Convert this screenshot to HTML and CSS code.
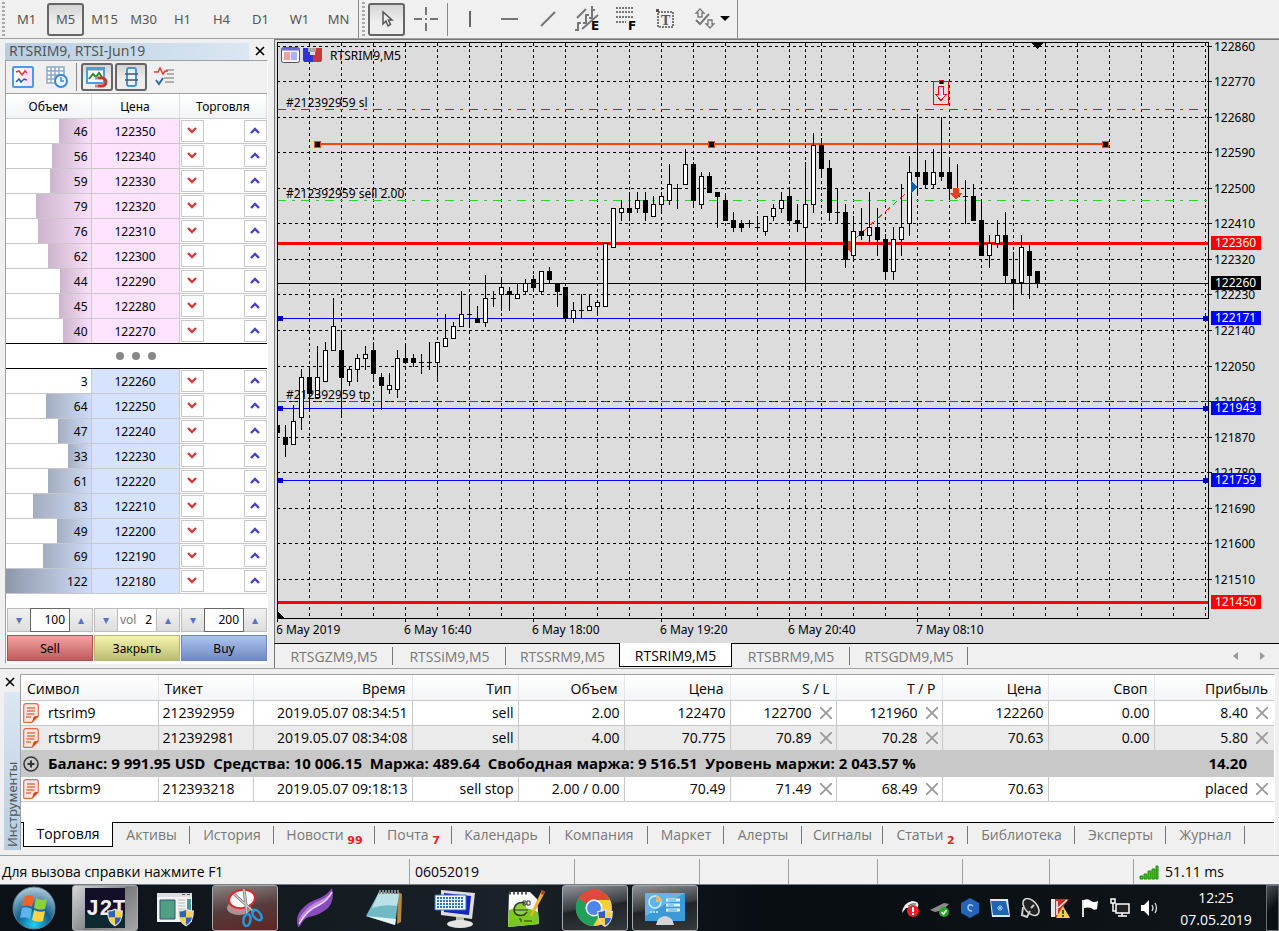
FILE: index.html
```html
<!DOCTYPE html>
<html lang="ru">
<head>
  <meta charset="UTF-8">
  <meta name="viewport" content="width=device-width, initial-scale=1.0">
  <title>RTSRIM9,M5</title>
  <link rel="stylesheet" href="styles.css">
</head>
<body>
  <!-- Shared icons -->
  <svg class="defs" aria-hidden="true">
    <symbol id="shield" viewBox="0 0 16 18">
      <path d="M8 0Q11 2 16 2Q16 14 8 18Q0 14 0 2Q5 2 8 0z" fill="#ddd"/>
      <path d="M8 1.500Q5 3 1.500 3Q1.500 6 2 9H8z" fill="#2d62b4"/>
      <path d="M8 1.500Q11 3 14.500 3Q14.500 6 14 9H8z" fill="#f8d348"/>
      <path d="M2 9H8V16.500Q3 14 2 9z" fill="#f8d348"/>
      <path d="M14 9H8V16.500Q13 14 14 9z" fill="#2d62b4"/>
    </symbol>
    <symbol id="doc" viewBox="0 0 16 20">
      <path d="M3 .7H13Q15.300 .7 15.300 3V13L9 19.300H1Q.5 19 .7 17V3Q.7 .7 3 .7z" fill="#fde8e0" stroke="#e46a4c" stroke-width="1.200"/>
      <path d="M4 5h8M4 8h8M3.500 11h8M3 14h5" stroke="#e8704f" stroke-width="1.300"/>
      <path d="M15.500 13Q12 12.500 10.500 14Q10 17 8.500 19.500z" fill="#e33c12"/>
    </symbol>
    <symbol id="cross" viewBox="0 0 12 12">
      <path d="M0 0L12 12M12 0L0 12" stroke="#999" stroke-width="1.800"/>
    </symbol>
  </svg>

  <!-- Top toolbar -->
  <header class="toolbar">
    <span class="grip"></span>
    <nav class="periods">
      <button>M1</button>
      <button class="pressed">M5</button>
      <button>M15</button>
      <button>M30</button>
      <button>H1</button>
      <button>H4</button>
      <button>D1</button>
      <button>W1</button>
      <button>MN</button>
    </nav>
    <span class="line tall"></span>
    <span class="grip"></span>
    <div class="tools">
      <button class="pressed" aria-label="Cursor"><svg width="26" height="26"><path d="M9 6v12l3-3 2 5 2.500-1.500-2-4.500h3.500z" fill="#eee" stroke="#555" stroke-width="1.500"/></svg></button>
      <button aria-label="Crosshair"><svg width="26" height="26"><path d="M13 1v8M13 17v8M1 13h8M17 13h8M12 13h2" stroke="#777" stroke-width="2"/></svg></button>
      <span class="line"></span>
      <button aria-label="Vertical line"><svg width="26" height="26"><path d="M13 5v16" stroke="#666" stroke-width="2"/></svg></button>
      <button aria-label="Horizontal line"><svg width="26" height="26"><path d="M5 13h17" stroke="#777" stroke-width="2"/></svg></button>
      <button aria-label="Trend line"><svg width="26" height="26"><path d="M6 20L20 6" stroke="#777" stroke-width="2"/></svg></button>
      <button aria-label="Equidistant channel"><svg width="30" height="28"><path d="M5 13L14 4M10 24L26 10M6 26v-9M3 25h3M6 18h3M14 19V9M11 18h3M14 10h3M20 14V1M17 13h3M20 5h3" stroke="#777" stroke-width="2"/><text x="19" y="25" class="tool-letter">E</text></svg></button>
      <button aria-label="Fibonacci"><svg width="30" height="28"><path d="M5 3h18M5 7h18M5 12h18M5 17h10" stroke="#777" stroke-width="2" stroke-dasharray="2 1"/><text x="17" y="25" class="tool-letter">F</text></svg></button>
      <button aria-label="Text"><svg width="26" height="26"><path d="M6 6h15v15H6z" fill="none" stroke="#777" stroke-width="2" stroke-dasharray="2 1"/><path d="M4 3h3v3H4z" fill="#555"/><text x="9" y="19" class="tool-serif">T</text></svg></button>
      <button aria-label="Arrows"><svg width="26" height="26"><path d="M9 3l4 4h-2v4H7V7H5zM19 22l-4-4h2v-4h4v4h2z" fill="#eee" stroke="#777" stroke-width="1.300"/><path d="M5 14l4 4L18 8" fill="none" stroke="#777" stroke-width="2"/></svg></button>
      <button class="more" aria-label="More"><svg width="10" height="6"><path d="M0 0h10L5 5z"/></svg></button>
    </div>
    <span class="line tall"></span>
  </header>

  <main class="workspace">
    <!-- Depth of market -->
    <section class="dom">
      <div class="dom-title">
        <h2>RTSRIM9, RTSI-Jun19</h2>
        <button class="close" aria-label="Close"><svg width="10" height="10"><path d="M1 1l8 8M9 1L1 9" stroke="#000" stroke-width="1.600"/></svg></button>
      </div>
      <div class="dom-body">
        <div class="dom-tools">
          <button aria-label="Ticks"><svg width="22" height="22"><rect x="1" y="1" width="20" height="20" rx="1" fill="#fff" stroke="#4b9be8" stroke-width="2"/><path d="M12 2h8v18h-8z" fill="#ffe3fa"/><path d="M4 6l3-1 3 4 3-4 2 2" fill="none" stroke="#e33" stroke-width="1.500"/><path d="M4 16l3-3 2 3 3-3 3 1" fill="none" stroke="#1e61b0" stroke-width="1.500"/></svg></button>
          <button aria-label="Time and sales"><svg width="22" height="22"><path d="M1 1h17v16H1zM1 5h17M1 9h17M1 13h17M5 1v16M9 1v16M13 1v16" fill="#fff" stroke="#8aa9cc" stroke-width="1.500"/><circle cx="15" cy="15" r="6" fill="#eef6ff" stroke="#3c88d6" stroke-width="2"/><path d="M15 11v4h3" fill="none" stroke="#3c88d6" stroke-width="1.500"/></svg></button>
          <span class="line"></span>
          <button class="pressed" aria-label="Magnet"><svg width="24" height="22"><rect x="2" y="2" width="17" height="15" fill="#fff" stroke="#4aa0dc" stroke-width="2"/><path d="M1 3h19" stroke="#4aa0dc" stroke-width="3"/><path d="M4 13l4-5 3 3 3-4 3 4" fill="none" stroke="#238b22" stroke-width="2"/><path d="M13 12h4a4 4 0 0 1 0 8h-4" fill="none" stroke="#c23c2c" stroke-width="3"/><path d="M10 12h3M10 20h3" stroke="#999" stroke-width="3"/></svg></button>
          <button class="pressed" aria-label="Center"><svg width="22" height="22"><rect x="7" y="2" width="9" height="18" rx="2" fill="#e7f2fb" stroke="#4a92d6" stroke-width="2"/><path d="M5 8h13M5 14h13" stroke="#555" stroke-width="1.500"/></svg></button>
          <button aria-label="Levels"><svg width="22" height="22"><path d="M12 4h8M13 8h7M10 12h10M11 16h9" stroke="#999" stroke-width="1.500"/><path d="M0 6h4l2-4 3 6 2-3h3" fill="none" stroke="#e33" stroke-width="1.500"/><path d="M2 14l3 4 4-6" fill="none" stroke="#2a6ca8" stroke-width="2"/></svg></button>
        </div>
        <table class="dom-table">
          <colgroup><col class="c-volume"><col class="c-price"><col></colgroup>
          <thead>
            <tr><th>Объем</th><th>Цена</th><th>Торговля</th></tr>
          </thead>
          <tbody id="dom-rows"></tbody>
        </table>
        <div class="order">
          <div class="stepper">
            <button aria-label="Stop loss down">▾</button>
            <label class="boxed"><input type="text" value="100" aria-label="Stop loss"></label>
            <button aria-label="Stop loss up">▴</button>
          </div>
          <div class="stepper">
            <button aria-label="Volume down">▾</button>
            <label>vol<input type="text" value="2"></label>
            <button aria-label="Volume up">▴</button>
          </div>
          <div class="stepper">
            <button aria-label="Take profit down">▾</button>
            <label class="boxed"><input type="text" value="200" aria-label="Take profit"></label>
            <button aria-label="Take profit up">▴</button>
          </div>
          <button class="deal sell">Sell</button>
          <button class="deal flat">Закрыть</button>
          <button class="deal buy">Buy</button>
        </div>
      </div>
    </section>

    <!-- Chart -->
    <section class="chart">
      <div class="chart-window">
        <svg id="chart"></svg>
      </div>
      <nav class="chart-tabs">
        <a href="#">RTSGZM9,M5</a>
        <a href="#">RTSSiM9,M5</a>
        <a href="#">RTSSRM9,M5</a>
        <a href="#" class="active">RTSRIM9,M5</a>
        <a href="#">RTSBRM9,M5</a>
        <a href="#">RTSGDM9,M5</a>
        <span class="scroll">
          <button aria-label="Previous"><svg width="5" height="8"><path d="M5 0v8L0 4z" fill="#999"/></svg></button>
          <button aria-label="Next"><svg width="5" height="8"><path d="M0 0v8l5-4z" fill="#999"/></svg></button>
        </span>
      </nav>
    </section>
  </main>

  <!-- Toolbox -->
  <section class="toolbox">
    <div class="toolbox-side">
      <button class="close" aria-label="Close"><svg width="10" height="10"><path d="M1 1l8 8M9 1L1 9" stroke="#000" stroke-width="1.600"/></svg></button>
      <span class="side-title">Инструменты</span>
    </div>
    <div class="toolbox-main">
      <table class="trades">
        <colgroup>
          <col class="c-symbol"><col class="c-ticket"><col class="c-time">
          <col class="c-num"><col class="c-num"><col class="c-num"><col class="c-num"><col class="c-num"><col class="c-num"><col class="c-num">
          <col>
        </colgroup>
        <thead>
          <tr><th>Символ</th><th>Тикет</th><th>Время</th><th>Тип</th><th>Объем</th><th>Цена</th><th>S / L</th><th>T / P</th><th>Цена</th><th>Своп</th><th>Прибыль</th></tr>
        </thead>
        <tbody>
          <tr>
            <td><svg class="doc"><use href="#doc"/></svg>rtsrim9</td><td>212392959</td><td>2019.05.07 08:34:51</td><td>sell</td><td>2.00</td><td>122470</td>
            <td>122700<button aria-label="Remove S / L"><svg><use href="#cross"/></svg></button></td>
            <td>121960<button aria-label="Remove T / P"><svg><use href="#cross"/></svg></button></td>
            <td>122260</td><td>0.00</td>
            <td>8.40<button aria-label="Close"><svg><use href="#cross"/></svg></button></td>
          </tr>
          <tr class="odd">
            <td><svg class="doc"><use href="#doc"/></svg>rtsbrm9</td><td>212392981</td><td>2019.05.07 08:34:08</td><td>sell</td><td>4.00</td><td>70.775</td>
            <td>70.89<button aria-label="Remove S / L"><svg><use href="#cross"/></svg></button></td>
            <td>70.28<button aria-label="Remove T / P"><svg><use href="#cross"/></svg></button></td>
            <td>70.63</td><td>0.00</td>
            <td>5.80<button aria-label="Close"><svg><use href="#cross"/></svg></button></td>
          </tr>
          <tr class="balance">
            <td colspan="10"><svg class="plus" viewBox="0 0 16 16"><circle cx="8" cy="8" r="7" fill="none" stroke="#333" stroke-width="1.500"/><path d="M8 4.500v7M4.500 8h7" stroke="#333" stroke-width="2"/></svg>Баланс: 9 991.95 USD&nbsp; Средства: 10 006.15&nbsp; Маржа: 489.64&nbsp; Свободная маржа: 9 516.51&nbsp; Уровень маржи: 2 043.57 %</td>
            <td class="total">14.20</td>
          </tr>
          <tr>
            <td><svg class="doc"><use href="#doc"/></svg>rtsbrm9</td><td>212393218</td><td>2019.05.07 09:18:13</td><td>sell stop</td><td>2.00 / 0.00</td><td>70.49</td>
            <td>71.49<button aria-label="Remove S / L"><svg><use href="#cross"/></svg></button></td>
            <td>68.49<button aria-label="Remove T / P"><svg><use href="#cross"/></svg></button></td>
            <td>70.63</td>
            <td colspan="2">placed<button aria-label="Delete"><svg><use href="#cross"/></svg></button></td>
          </tr>
        </tbody>
      </table>
      <nav class="tabs">
        <a href="#" class="active">Торговля</a>
        <a href="#">Активы</a>
        <a href="#">История</a>
        <a href="#">Новости <b>99</b></a>
        <a href="#">Почта <b>7</b></a>
        <a href="#">Календарь</a>
        <a href="#">Компания</a>
        <a href="#">Маркет</a>
        <a href="#">Алерты</a>
        <a href="#">Сигналы</a>
        <a href="#">Статьи <b>2</b></a>
        <a href="#">Библиотека</a>
        <a href="#">Эксперты</a>
        <a href="#">Журнал</a>
      </nav>
    </div>
  </section>

  <!-- Status bar -->
  <footer class="status">
    <span>Для вызова справки нажмите F1</span>
    <span>06052019</span>
    <span></span><span></span><span></span><span></span><span></span><span></span>
    <span><svg width="20" height="15"><path d="M1 11h3v3H1zM5 9h3v5H5zM9 6h3v8H9zM13 4h3v10h-3zM17 1h2v13h-2z" fill="#3fc416" stroke="#1f8a10"/></svg>51.11 ms</span>
  </footer>

  <!-- Taskbar -->
  <div class="taskbar">
    <button class="start" aria-label="Start">
      <svg width="44" height="44" viewBox="0 0 44 44">
        <defs><radialGradient id="orb" cx=".5" cy=".9" r=".9"><stop offset="0" stop-color="#1fd0f5"/><stop offset=".45" stop-color="#10608f"/><stop offset="1" stop-color="#b9cfdc"/></radialGradient></defs>
        <circle cx="22" cy="22" r="21" fill="url(#orb)" stroke="#5a7f94"/>
        <path d="M13 10q5-2 9 1l-2 10q-5-3-10-1z" fill="#f0642a"/>
        <path d="M24 12q5 3 11 1l-2 10q-6 2-11-1z" fill="#8fce3f"/>
        <path d="M10 22q5-2 10 1l-2 10q-5-3-10-1z" fill="#5ab5ee"/>
        <path d="M22 24q5 3 11 1l-2 10q-6 2-11-1z" fill="#fbd344"/>
      </svg>
    </button>
    <button class="task on light" aria-label="J2T"><svg width="40" height="40"><path d="M0 0h40v40H0z" fill="#130f28"/><path d="M0 26h40v14H0z" fill="#0e2a30"/><text x="1" y="27" class="j2t">J2T</text><use href="#shield" x="22" y="20" width="16" height="19"/></svg></button>
    <button class="task" aria-label="Explorer"><svg width="40" height="40"><path d="M2 5h35v29H2z" fill="#f3f3f3"/><path d="M2 5h35v4H2z" fill="#ddd"/><path d="M27 6.500h3M32 6.500h3" stroke="#555"/><path d="M5 12h15v19H5z" fill="#4f9f82" stroke="#357"/><path d="M23 12h7M23 15h7M23 18h7M23 21h7" stroke="#bbb"/><path d="M32 11h4v11h-4z" fill="#4d96a0"/><use href="#shield" x="23" y="20" width="16" height="19"/></svg></button>
    <button class="task on red" aria-label="Snipping tool"><svg width="40" height="40"><ellipse cx="14" cy="20" rx="12" ry="7" fill="#b09090"/><ellipse cx="17" cy="11" rx="13" ry="9" transform="rotate(-10 17 11)" fill="#fff" stroke="#e2222b" stroke-width="2"/><path d="M9 6L29 24M19 1L22 26" stroke="#777" stroke-width="3"/><path d="M9 6L29 24M19 1L22 26" stroke="#ccc" stroke-width="1.500"/><ellipse cx="22" cy="32" rx="3.500" ry="6" transform="rotate(10 22 32)" fill="none" stroke="#2797d8" stroke-width="2.500"/><ellipse cx="32" cy="27" rx="3.500" ry="6" transform="rotate(-40 32 27)" fill="none" stroke="#2797d8" stroke-width="2.500"/></svg></button>
    <button class="task" aria-label="Feather"><svg width="40" height="40"><path d="M3 39Q0 29 6 22Q14 13 25 10Q33 6 37 0Q40 12 33 20Q25 27 14 29Q8 31 5 38z" fill="#8a4bbd"/><path d="M4 31Q12 17 26 12Q33 9 37 3Q34 14 23 18Q12 22 4 34z" fill="#b98ade"/><path d="M4 36Q12 22 24 17Q33 12 37 4" fill="none" stroke="#ecd8f8" stroke-width="1.500"/></svg></button>
    <button class="task" aria-label="Notepad"><svg width="40" height="40"><path d="M33 4l4 2-1 28-4 2z" fill="#b58640"/><path d="M14 4L34 6 30 37 1 28z" fill="#6fbac4"/><path d="M14 4L34 6 32 18Q18 16 7 20z" fill="#b9e2e6"/><path d="M14 4h20" stroke="#888" stroke-width="4" stroke-dasharray="2 1"/><path d="M1 28L30 37l1-6z" fill="#e6f4f5"/></svg></button>
    <button class="task" aria-label="Keyboard"><svg width="42" height="40"><path d="M7 2L41 5 38 31 7 27z" fill="#ddd"/><path d="M10 5L37 8 35 27 10 24z" fill="#1520c8"/><path d="M22 29h8v5h-8z" fill="#bbb"/><ellipse cx="26" cy="36" rx="13" ry="4" fill="#e4e4e4"/><path d="M1 7h31v15H1z" fill="#f4f8fc" stroke="#2d74b5"/><path d="M3 10h27M3 13h27M3 16h27M3 19h27" stroke="#2d74b5" stroke-width="2" stroke-dasharray="2 1"/></svg></button>
    <button class="task" aria-label="Notepad++"><svg width="40" height="40"><path d="M4 4h21l7 7 2 25-31 3z" fill="#fbfbfb"/><path d="M4 22Q16 16 33 24l1 12-31 3z" fill="#7bc820"/><path d="M4 5h20" stroke="#555" stroke-width="3" stroke-dasharray="2 2"/><path d="M20 15q-9-2-11 6 0 8 10 6l3-3" fill="#8ed23a" stroke="#333" stroke-width="1.500"/><path d="M18 13h3v4h-3zM22 13h3v4h-3zM9 22h14M14 31h2v3M19 33h8" fill="none" stroke="#333"/><path d="M37 2l3 2L28 27l-3 2 1-4z" fill="#f0b02c"/><path d="M37 2l3 2-2 3-2-1z" fill="#b33"/></svg></button>
    <button class="task on" aria-label="Chrome"><svg width="40" height="40"><circle cx="19" cy="20" r="18" fill="#f9cd3f"/><path d="M19 20L3 11A18 18 0 0 1 35 12H19z" fill="#df4a3b"/><path d="M19 20L3.500 10.500A18 18 0 0 0 18 38L26 25z" fill="#20a05b"/><circle cx="19" cy="20" r="8.500" fill="#fff"/><circle cx="19" cy="20" r="7" fill="#4a86ec"/><use href="#shield" x="22" y="21" width="16" height="18"/></svg></button>
    <button class="task on" aria-label="Control panel"><svg width="40" height="40"><path d="M0 5h40v28H0z" fill="#3c9ad7"/><path d="M0 5h40L0 28z" fill="#62b5e6"/><circle cx="10" cy="14" r="6" fill="none" stroke="#d4ecfa" stroke-width="1.500"/><path d="M11 14V8a6 6 0 0 1 6 6z" fill="#f6b45a"/><path d="M21 12h14M21 17h14M21 22h14" stroke="#e3f4ff" stroke-width="3"/><path d="M23 12h8M23 17h6M23 22h9" stroke="#3c9ad7"/><path d="M5 24h8" stroke="#9ee3ff" stroke-width="2" stroke-dasharray="2 1"/><path d="M11 37q1-8 9-9 8 1 9 9z" fill="#d5d5d5"/></svg></button>

    <div class="tray">
      <svg viewBox="0 0 20 20"><path d="M2 15Q3 5 12 3Q20 3 18 9L6 10z" fill="#eee"/><path d="M8 8q4-3 8-2" stroke="#444" fill="none"/><circle cx="13" cy="13" r="6" fill="#e0232c"/><path d="M13 9v5M13 15v2" stroke="#fff" stroke-width="2"/></svg>
      <svg viewBox="0 0 20 20"><path d="M0 12L14 5l5 1-6 6-8 2z" fill="#8a8a8a"/><circle cx="14" cy="14" r="5" fill="#28a52c"/><path d="M11.500 14l2 2 3-4" fill="none" stroke="#fff" stroke-width="1.500"/></svg>
      <svg viewBox="0 0 20 20"><path d="M10 0l9 5v10l-9 5-9-5V5z" fill="#2465b8"/><path d="M13 8q-4-3-5 1 0 4 4 4" fill="none" stroke="#a9cdf5" stroke-width="1.500"/></svg>
      <svg viewBox="0 0 20 20"><path d="M0 1h18l2 18H2z" fill="#dce8f5"/><path d="M1 3h15l3 14H3z" fill="#1f63b3"/><path d="M10 7v6M7 10h6M8 8l4 4M12 8l-4 4" stroke="#9cc7f4"/></svg>
      <svg viewBox="0 0 20 20"><ellipse cx="11" cy="9" rx="6" ry="10" transform="rotate(-42 11 9)" fill="#222" stroke="#ddd" stroke-width="1.500"/><path d="M3 9l-1 8 5 2 3-6M11 10l3-3" stroke="#ccc" stroke-width="2" fill="none"/></svg>
      <svg viewBox="0 0 20 20"><path d="M1 1h18l-6 8 6 10H1z" fill="#d42b26"/><path d="M1 1h4v18H1z" fill="#e8e8e8"/><path d="M17 2L8 10M7 3v14" stroke="#fff" stroke-width="1.500"/><path d="M13 8l7 12H6z" fill="#f2cf4d"/><path d="M13 12v4M13 17v2" stroke="#222" stroke-width="1.500"/></svg>
      <svg viewBox="0 0 20 20"><path d="M3 2v17" stroke="#ddd" stroke-width="2"/><path d="M4 2q4-2 7 1 3 2 7 0l-1 8q-3 2-6-1-3-1-7 0z" fill="#fff"/></svg>
      <svg viewBox="0 0 20 20"><path d="M6 6h13v9H6z" fill="#222" stroke="#fff" stroke-width="1.500"/><path d="M8 18h9M12 15v3M3 5v8h3M1 1h4v4H1z" stroke="#fff" stroke-width="1.500" fill="none"/></svg>
      <svg viewBox="0 0 20 20"><path d="M1 7h3l5-5v16l-5-5H1z" fill="#fff"/><path d="M12 7q2 3 0 6M15 5q3 5 0 10" fill="none" stroke="#ddd" stroke-width="1.300"/></svg>
    </div>
    <div class="clock"><time>12:25</time><time>07.05.2019</time></div>
    <button class="desktop" aria-label="Show desktop"></button>
  </div>

  <script src="script.js"></script>
</body>
</html>
```

FILE: styles.css
```css
/* Base Styling */
* {
  margin: 0;
  padding: 0;
  box-sizing: border-box;
}

body {
  display: flex;
  flex-direction: column;
  height: 100vh;
  overflow: hidden;
  background-color: #f0f0f0;
  color: #000;
  font-family: "Open Sans", "Noto Sans", sans-serif;
  font-size: 14px;
}

button {
  border: none;
  background: none;
  font: inherit;
  color: inherit;
}

a {
  color: inherit;
  text-decoration: none;
}

svg {
  display: block;
  flex: none;
}

.defs {
  position: absolute;
  width: 0;
  height: 0;
}

/* Top toolbar */
.toolbar {
  display: flex;
  align-items: center;
  flex: none;
  height: 39px;
  border-bottom: 1px solid #a0a0a0;
  font-family: "Noto Sans", sans-serif;
  font-size: 13px;
  color: #555;
}

.grip {
  width: 3px;
  height: 34px;
  margin: 0 2px;
  background: repeating-linear-gradient(#aaa 0 2px, transparent 2px 4px);
}

.periods,
.tools {
  display: flex;
  align-items: center;
}

.periods button,
.tools button {
  display: flex;
  align-items: center;
  justify-content: center;
  width: 37px;
  height: 33px;
  margin: 0 1px;
}

.tools .more {
  width: 16px;
  margin-left: -6px;
  margin-right: 4px;
}

.tool-letter {
  font: bold 12px "DejaVu Sans", sans-serif;
  fill: #000;
}

.tool-serif {
  font: bold 14px "Liberation Serif", serif;
  fill: #555;
}

.pressed {
  border: 2px solid #666;
  border-radius: 3px;
  background: linear-gradient(#d4d4d4, #eee 60%);
}

.line {
  width: 1px;
  height: 33px;
  margin: 0 2px;
  background-color: #888;
}

.line.tall {
  height: 38px;
  margin: 0 1px 0 0;
}

/* Workspace */
.workspace {
  display: flex;
  flex: 1;
  min-height: 0;
}

.close {
  display: flex;
  align-items: center;
  justify-content: center;
  width: 20px;
  height: 16px;
}

/* Depth of market */
.dom {
  display: flex;
  flex-direction: column;
  flex: none;
  width: 274px;
  padding: 4px 6px 4px 5px;
}

.dom-title {
  display: flex;
  justify-content: space-between;
  height: 17px;
}

.dom-title h2 {
  width: 244px;
  padding-left: 4px;
  background: linear-gradient(90deg, #b8cde0, #dbe7f2);
  font: 14px/16px "Noto Sans", sans-serif;
  color: #555;
}

.dom-title .close {
  margin-right: -2px;
}

.dom-body {
  display: flex;
  flex-direction: column;
  flex: 1;
  border: 1px solid #a0a0a0;
  border-right-color: #fff;
  border-bottom-color: #fff;
  background-color: #fff;
  font-family: "Noto Sans", sans-serif;
  font-size: 12px;
}

.dom-tools {
  display: flex;
  align-items: center;
  gap: 2px;
  height: 33px;
  padding: 0 1px;
  border-bottom: 1px solid #a0a0a0;
  background-color: #f0f0f0;
}

.dom-tools button {
  display: flex;
  align-items: center;
  justify-content: center;
  width: 32px;
  height: 28px;
}

.dom-tools .line {
  height: 28px;
  margin: 0 2px 0 1px;
}

.dom-table {
  width: 100%;
  border-collapse: collapse;
  table-layout: fixed;
}

.c-volume {
  width: 85px;
}

.c-price {
  width: 88px;
}

.dom-table th {
  height: 24px;
  padding-top: 2px;
  border-right: 1px solid #ddd;
  border-bottom: 1px solid #ccc;
  background: linear-gradient(#fff, #f3f4f6);
  font-weight: normal;
}

.dom-table td {
  height: 25px;
  border-bottom: 1px solid #c8c8c8;
}

.volume {
  display: flex;
  justify-content: flex-end;
}

.volume span {
  height: 24px;
  padding-right: 3px;
  line-height: 25px;
  text-align: right;
  white-space: nowrap;
}

.ask .volume span {
  background: linear-gradient(90deg, #ccb5cc, #fbe0fb);
}

.bid .volume span {
  background: linear-gradient(90deg, #a3adc0, #cfdcf7);
}

.bid .volume .peak {
  background: linear-gradient(90deg, #8e98ac, #cfdcf7);
}

.bid .volume .small {
  background: none;
}

.price {
  padding-top: 1px;
  border-left: 1px solid #c8c8c8;
  border-right: 1px solid #c8c8c8;
  text-align: center;
}

.ask .price {
  background-color: #ffe3ff;
}

.bid .price {
  background-color: #d6e3ff;
}

.trade {
  display: flex;
  justify-content: space-between;
  padding-left: 1px;
}

.trade button {
  display: flex;
  align-items: center;
  justify-content: center;
  width: 23px;
  height: 22px;
  padding-bottom: 1px;
  border: 1px solid #c8c8c8;
  background-color: #fff;
}

.dom-table .ask:nth-child(9) td,
.dom-table .dots td {
  border-bottom: 1px solid #000;
}

.dots svg {
  margin: 0 auto;
}

/* Order form */
.order {
  display: grid;
  grid-template-columns: 1fr 1fr 1fr;
  gap: 3px 1px;
  margin-top: auto;
  padding: 0 0 2px 1px;
}

.stepper {
  display: flex;
  height: 24px;
  border: 1px solid #bbb;
}

.stepper button {
  width: 22px;
  background: linear-gradient(#f2f2f2, #ddd);
  color: #5672c4;
  font-family: "DejaVu Sans", sans-serif;
}

.stepper label {
  display: flex;
  align-items: center;
  flex: 1;
  min-width: 0;
  padding: 0 4px 2px 2px;
  border: 1px solid #bbb;
  border-width: 0 1px;
  background-color: #fff;
  color: #777;
}

.stepper .boxed {
  margin: -1px 0;
  border: 1px solid #666;
}

.stepper input {
  flex: 1;
  width: 0;
  border: none;
  outline: none;
  background: none;
  font: inherit;
  color: #000;
  text-align: right;
}

.deal {
  height: 26px;
  border: 1px solid #999;
}

.sell {
  border-color: #b05050;
  background: linear-gradient(#f2a2a2, #c05c5c);
}

.flat {
  border-color: #b4b478;
  background: linear-gradient(#f4f4ac, #bcbc74);
}

.buy {
  border-color: #6d88c0;
  background: linear-gradient(#acc4f4, #6f8abd);
}

/* Chart */
.chart {
  display: flex;
  flex-direction: column;
  flex: 1;
  min-width: 0;
}

.chart-window {
  flex: 1;
  min-height: 0;
  padding: 2px 0 0 2px;
  border-left: 1px solid #777;
  border-top: 1px solid #777;
  background-color: #dcdcdc;
}

#chart {
  width: 100%;
  height: 100%;
  font-family: "Noto Sans", sans-serif;
  font-size: 12px;
}

.chart-tabs {
  display: flex;
  height: 25px;
  border-top: 1px solid #000;
  border-left: 1px solid #777;
  line-height: 26px;
  color: #777;
}

.chart-tabs a {
  position: relative;
  width: 118px;
  height: 24px;
  text-align: center;
}

.chart-tabs a:nth-child(2),
.chart-tabs a:nth-child(3) {
  width: 113px;
}

.chart-tabs a::after,
.tabs a::after {
  content: '';
  position: absolute;
  right: 0;
  top: 3px;
  width: 1px;
  height: 18px;
  background-color: #777;
}

.chart-tabs .active {
  width: 113px;
  margin-top: -1px;
  border: 1px solid #000;
  border-top: none;
  background-color: #fff;
  color: #000;
}

.chart-tabs a:nth-child(3)::after,
.chart-tabs .active::after,
.tabs .active::after {
  display: none;
}

.scroll {
  display: flex;
  align-items: center;
  gap: 22px;
  margin-left: auto;
  padding-right: 14px;
}

/* Toolbox */
.toolbox {
  display: flex;
  flex: none;
  height: 187px;
  padding: 5px 4px 5px 0;
  border-top: 1px solid #a0a0a0;
}

.toolbox-side {
  display: flex;
  flex-direction: column;
  align-items: center;
  gap: 2px;
  width: 20px;
}

.side-title {
  flex: 1;
  width: 16px;
  margin-left: 3px;
  background: linear-gradient(#b8cde0, #dbe7f2);
  writing-mode: vertical-rl;
  transform: rotate(180deg);
  font: 13px/16px "Noto Sans", sans-serif;
  padding-top: 3px;
  color: #555;
}

.toolbox-main {
  display: flex;
  flex-direction: column;
  justify-content: space-between;
  flex: 1;
  border: 1px solid #a0a0a0;
  border-width: 1px 1px 0;
  border-right-color: #fff;
  background-color: #fff;
}

.trades {
  width: 100%;
  border-collapse: collapse;
  table-layout: fixed;
}

.c-symbol {
  width: 137px;
}

.c-ticket {
  width: 95px;
}

.c-time {
  width: 159px;
}

.c-num {
  width: 106px;
}

.trades th {
  height: 25px;
  padding: 2px 6px 0;
  border-right: 1px solid #e4e6ea;
  border-bottom: 1px solid #c8c8c8;
  background: linear-gradient(#fff, #f3f4f6);
  font-weight: normal;
  text-align: right;
}

.trades th:nth-child(-n+2) {
  text-align: left;
}

.trades td {
  height: 25px;
  padding: 0 4px;
  border-right: 1px solid #c8c8c8;
  border-bottom: 1px solid #c8c8c8;
  line-height: 24px;
  text-align: right;
  white-space: nowrap;
}

.trades td:nth-child(-n+2) {
  text-align: left;
}

.trades td:first-child {
  padding-left: 2px;
}

.trades td:last-child,
.trades th:last-child {
  padding-right: 6px;
  border-right: none;
}

.trades td button {
  margin-left: 8px;
  vertical-align: middle;
}

.trades td button svg {
  width: 12px;
  height: 12px;
  margin-bottom: 2px;
}

.doc,
.plus {
  display: inline-block;
  width: 16px;
  height: 20px;
  margin-right: 9px;
  margin-bottom: 2px;
  vertical-align: middle;
}

.trades .odd td {
  background-color: #ebebeb;
}

.trades .balance td {
  border-color: #c8c8c8;
  background-color: #c8c8c8;
  font-size: 15px;
  font-weight: bold;
}

.trades .balance .total {
  padding-right: 27px;
  text-align: right;
}

.tabs {
  display: grid;
  grid-template-columns: 92px 77px 84px 101px 77px 98px 98px 76px 78px 81px 85px 107px 91px 79px;
  height: 28px;
  border-top: 1px solid #000;
  background-color: #f0f0f0;
  color: #777;
  line-height: 23px;
}

.tabs a {
  position: relative;
  height: 25px;
  text-align: center;
  white-space: nowrap;
}

.tabs .active {
  margin-top: -1px;
  margin-left: 2px;
  border: 1px solid #000;
  border-top: none;
  background-color: #fff;
  color: #000;
}

.tabs b {
  color: #e81c24;
  font: bold 11px/12px "DejaVu Sans", sans-serif;
  vertical-align: -4px;
}

/* Status bar */
.status {
  display: grid;
  grid-template-columns: 409px 165px 125px 89px 89px 85px 87px 84px 1fr;
  flex: none;
  height: 29px;
  padding: 3px 0 2px;
  border-top: 1px solid #a0a0a0;
  line-height: 26px;
}

.status span {
  display: flex;
  align-items: center;
  gap: 6px;
  padding-left: 5px;
  border-left: 1px solid #a0a0a0;
}

.status span:first-child {
  padding-left: 2px;
  border-left: none;
}

/* Taskbar */
.taskbar {
  display: flex;
  flex: none;
  gap: 4px;
  height: 47px;
  border-top: 1px solid #71808c;
  background: linear-gradient(90deg, #0a1016, #1a2128 40%, #080d12 60%, #10151a);
  color: #fff;
}

.start {
  display: flex;
  justify-content: center;
  width: 68px;
  padding-top: 1px;
}

.task {
  display: flex;
  align-items: center;
  justify-content: center;
  width: 66px;
  border-radius: 3px;
}

.task.on {
  border: 1px solid #aaa;
  background: linear-gradient(170deg, #90949a, #3a3e42 45%, #202427 50%, #34393d);
}

.task.light {
  background: linear-gradient(135deg, #d4d6d8, #888b8e 50%, #77797c 50%, #a4a6a8);
}

.task.red {
  background: linear-gradient(170deg, #8c8484, #553c3c 50%, #602424);
}

.j2t {
  font: bold 22px "Liberation Mono", monospace;
  fill: #eee;
}

.tray {
  display: flex;
  align-items: center;
  gap: 10px;
  margin-left: auto;
}

.tray svg {
  width: 20px;
  height: 20px;
}

.clock {
  display: flex;
  flex-direction: column;
  align-items: center;
  justify-content: center;
  width: 102px;
  padding: 2px 0 0 2px;
  line-height: 22px;
}

.desktop {
  width: 13px;
  margin-left: -4px;
  border: 1px solid #6a6f74;
  background: linear-gradient(135deg, #4a4e52, #0c1013 50%);
}
```

FILE: script.js
```js
// Depth of market
const asks = [[46, 122350], [56, 122340], [59, 122330], [79, 122320], [76, 122310], [62, 122300], [44, 122290], [45, 122280], [40, 122270]];
const bids = [[3, 122260], [64, 122250], [47, 122240], [33, 122230], [61, 122220], [83, 122210], [49, 122200], [69, 122190], [122, 122180]];
const maxVolume = 122;

function domRow([volume, price], side) {
  let mark = '';
  if (volume === maxVolume) mark = 'peak';
  if (volume < 10) mark = 'small';
  return `<tr class="${side}">
    <td><div class="volume"><span class="${mark}" style="width: ${Math.max(volume / maxVolume * 100, 14)}%">${volume}</span></div></td>
    <td class="price">${price}</td>
    <td><div class="trade">
      <button aria-label="Sell ${price}"><svg width="10" height="7"><path d="M1 1l4 4 4-4" fill="none" stroke="#d03c3c" stroke-width="2.400"/></svg></button>
      <button aria-label="Buy ${price}"><svg width="10" height="7"><path d="M1 6l4-4 4 4" fill="none" stroke="#4444c8" stroke-width="2.400"/></svg></button>
    </div></td>
  </tr>`;
}

document.getElementById('dom-rows').innerHTML =
  asks.map(row => domRow(row, 'ask')).join('') +
  '<tr class="dots"><td colspan="3"><svg width="42" height="10" fill="#888"><circle cx="5" cy="5" r="4"/><circle cx="21" cy="5" r="4"/><circle cx="37" cy="5" r="4"/></svg></td></tr>' +
  bids.map(row => domRow(row, 'bid')).join('');

// Candles: wick top, body top, body bottom, wick bottom, 1 = rising
const candles = [
  [383, 383, 391, 391, 0], [383, 395, 403, 415, 0], [363, 379, 403, 403, 1], [327, 335, 376, 388, 1],
  [326, 335, 352, 366, 0], [304, 335, 356, 356, 1], [300, 308, 340, 340, 1], [256, 284, 309, 309, 1],
  [288, 308, 336, 374, 0], [325, 327, 340, 344, 1], [312, 316, 328, 340, 1], [304, 312, 317, 328, 1],
  [300, 308, 332, 338, 0], [331, 335, 344, 368, 0], [331, 343, 348, 352, 1], [308, 316, 348, 356, 1],
  [304, 316, 321, 321, 0], [312, 316, 321, 325, 0], [312, 320, 321, 332, 0], [300, 320, 321, 328, 0],
  [300, 300, 321, 338, 1], [272, 296, 305, 305, 1], [280, 284, 297, 297, 1], [249, 272, 285, 285, 1],
  [256, 272, 273, 284, 0], [264, 276, 281, 281, 0], [233, 256, 281, 285, 1], [249, 256, 257, 265, 0],
  [235, 245, 253, 269, 1], [245, 249, 253, 269, 0], [241, 252, 257, 257, 1], [237, 241, 250, 253, 1],
  [233, 237, 246, 250, 0], [229, 229, 250, 253, 1], [225, 229, 238, 241, 0], [241, 241, 250, 265, 0],
  [245, 245, 277, 277, 0], [260, 268, 277, 281, 1], [252, 268, 269, 277, 0], [252, 264, 269, 269, 1],
  [258, 260, 265, 271, 1], [201, 201, 265, 265, 1], [166, 166, 206, 206, 1], [158, 166, 171, 179, 1],
  [150, 166, 171, 179, 0], [150, 158, 167, 171, 1], [150, 158, 171, 179, 0], [154, 162, 175, 175, 1],
  [150, 154, 163, 171, 1], [122, 142, 159, 163, 1], [142, 146, 147, 167, 0], [107, 122, 143, 143, 1],
  [120, 122, 159, 163, 0], [130, 134, 163, 167, 1], [130, 134, 151, 151, 0], [150, 150, 155, 186, 0],
  [154, 158, 179, 179, 0], [170, 178, 186, 190, 0], [178, 181, 186, 190, 0], [178, 181, 182, 186, 0],
  [174, 185, 186, 190, 0], [174, 174, 190, 194, 1], [162, 166, 175, 179, 1], [150, 158, 167, 171, 1],
  [146, 154, 179, 182, 0], [162, 178, 182, 190, 0], [120, 162, 186, 250, 1], [91, 103, 163, 171, 1],
  [96, 103, 127, 133, 0], [118, 126, 171, 179, 0], [146, 170, 171, 181, 0], [162, 170, 218, 226, 0],
  [174, 189, 214, 218, 1], [166, 189, 194, 198, 0], [150, 185, 194, 202, 1], [166, 185, 198, 214, 0],
  [192, 197, 230, 238, 0], [185, 197, 230, 238, 1], [142, 185, 198, 214, 1], [114, 130, 182, 194, 1],
  [72, 130, 135, 153, 0], [118, 130, 143, 147, 0], [107, 130, 143, 147, 1], [75, 130, 135, 139, 0],
  [118, 130, 147, 158, 0], [122, 154, 155, 155, 0], [138, 154, 155, 182, 0], [142, 154, 179, 179, 0],
  [157, 178, 214, 214, 0], [193, 201, 214, 226, 1], [178, 193, 202, 206, 1], [170, 193, 234, 241, 0],
  [210, 237, 241, 267, 0], [193, 205, 241, 252, 1], [201, 209, 234, 257, 0], [229, 229, 241, 246, 0]
];

const gridRows = [4, 39, 75, 110, 146, 181, 217, 252, 288, 324, 359, 395, 430, 466, 501, 537];
const chart = document.getElementById('chart');

function rect(x, y, w, h, fill) {
  return `<rect x="${x}" y="${y}" width="${w}" height="${h}" fill="${fill}"/>`;
}

function line(x1, y1, x2, y2, color, dash) {
  return `<path d="M${x1} ${y1}L${x2} ${y2}" stroke="${color}" stroke-dasharray="${dash || 'none'}"/>`;
}

function text(x, y, value, color) {
  return `<text x="${x}" y="${y}" fill="${color || '#000'}">${value}</text>`;
}

function drawChart() {
  const right = chart.clientWidth - 71;
  const bottom = chart.clientHeight - 25;
  let out = '<g shape-rendering="crispEdges">';

  // Grid
  for (let x = 32; x < right; x += 32) {
    out += line(x + 0.5, 1, x + 0.5, bottom - 2, '#000', '3 3');
  }
  out += line(528.5, 1, 528.5, bottom - 2, '#000', '3 3');
  gridRows.forEach((y, i) => {
    out += line(0, y + 0.5, right, y + 0.5, '#000', '3 3');
    out += line(right, y + 0.5, right + 4, y + 0.5, '#000');
    out += text(right + 6, y + 5, 122860 - i * 90);
  });

  // Order and price levels
  out += line(0, 67.5, right, 67.5, '#f00', '9 6 3 6');
  out += line(0, 158.5, right, 158.5, '#32cd32', '9 6 3 6');
  out += line(0, 359.5, right, 359.5, '#f00', '9 6 3 6');
  out += rect(40, 101, 788, 2, '#ff4500');
  out += rect(0, 200, right, 3, '#f00') + rect(0, 559, right, 3, '#f00');
  out += rect(0, 241, right, 1, '#000');
  [276, 366, 438].forEach(y => {
    out += rect(0, y, right, 1, '#00f');
    [1, right - 5].forEach(x => {
      out += rect(x, y - 2, 5, 5, '#00f') + rect(x + 1, y - 1, 3, 3, '#000080');
    });
  });
  [40, 434, 828].forEach(x => {
    out += rect(x - 3, 99, 7, 7, '#ff4500') + rect(x - 2, 100, 5, 5, '#000');
  });

  // Deals
  out += '<path d="M567 199h8v12l-3-2-5-6z" fill="#e04020"/>';
  out += line(571, 203, 636, 145, '#e04020', '6 4');

  // Candles
  candles.forEach(([high, top, low, end, up], i) => {
    const x = i * 8;
    const left = Math.max(x - 2, 0);
    out += rect(x, high, 1, end - high, '#000');
    if (low - top === 1) {
      out += rect(x - 2, top, 5, 1, '#000');
    } else {
      out += rect(left, top, x + 3 - left, low - top, '#000');
      if (up) out += rect(x - 1, top + 1, 3, low - top - 2, '#fff');
    }
  });

  out += '<path d="M634 139l6 6-6 6z" fill="#0a5fb0"/>';
  out += '<path d="M676 146h6v5h4l-7 6-7-6h4z" fill="#e04020"/>';
  out += '<path d="M656.500 39.500h15v23h-15z" fill="none" stroke="#f00"/>';
  out += '<path d="M661.500 44.500h5v8h3l-5.500 6-5.500-6h3z" fill="#f0dcf0" stroke="#f00"/>';
  out += rect(662, 38, 5, 4, '#f00') + rect(663, 39, 3, 3, '#000');

  // Axes
  out += rect(0, 0, right + 1, 1, '#000') + rect(0, 0, 1, bottom + 4, '#000');
  out += rect(right, 0, 1, bottom, '#000') + rect(0, bottom, right + 1, 1, '#000');
  out += `<path d="M754 1h12l-6 6z"/><path d="M1 ${bottom}v-6l6 6z"/>`;
  ['6 May 2019', '6 May 16:40', '6 May 18:00', '6 May 19:20', '6 May 20:40', '7 May 08:10'].forEach((label, i) => {
    const x = i * 128;
    out += rect(x, bottom, 1, 4, '#000') + text(x - 1, bottom + 16, label);
  });
  [[201, 122360, '#f00'], [241, 122260, '#000'], [276, 122171, '#00f'], [366, 121943, '#00f'], [438, 121759, '#00f'], [560, 121450, '#f00']].forEach(([y, price, color]) => {
    out += rect(right + 3, y - 7, 50, 14, color) + text(right + 7, y + 4, price, '#fff');
  });

  // Captions
  out += text(9, 65, '#212392959 sl') + text(9, 156, '#212392959 sell 2.00') + text(9, 357, '#212392959 tp');
  out += text(53, 18, 'RTSRIM9,M5') + '</g>';
  out += '<rect x="4.500" y="5.500" width="18" height="15" rx="2" fill="#f4f4fa" stroke="#555"/><path d="M5 7h17" stroke="#6868d8" stroke-width="3"/><path d="M7 11h6M7 13h6M7 15h6M7 17h6" stroke="#e05050"/><path d="M14 11h6M14 13h6M14 15h6M14 17h6" stroke="#6070e8"/>';
  out += '<path d="M26 6h7v7h3v7h-9l-1-2z" fill="#3030e0"/><path d="M45 6h-7v7h-2v7h8l1-2z" fill="#c83838"/><path d="M31 6h8v4h-8z" fill="#aaa"/>';
  chart.innerHTML = out;
}

drawChart();
window.addEventListener('resize', drawChart);
```
